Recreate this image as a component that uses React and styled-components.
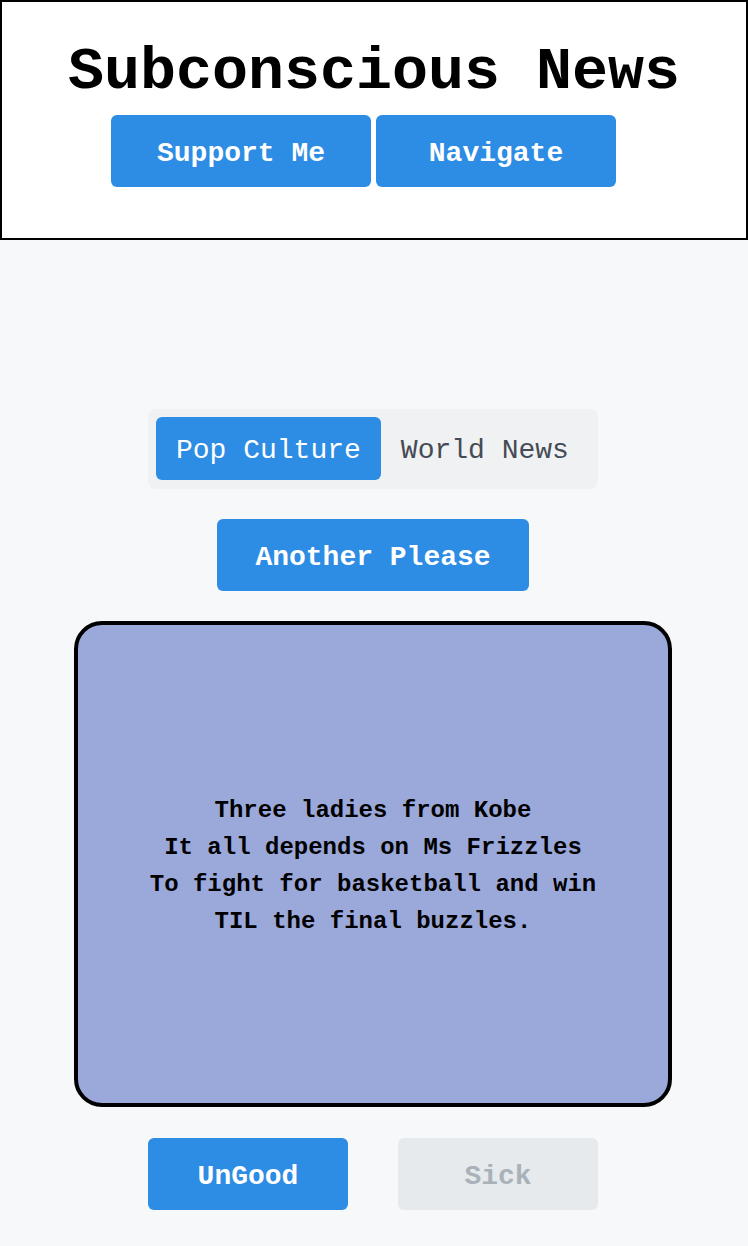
import React, { useState } from 'react';
import styled, { createGlobalStyle } from 'styled-components';

const GlobalStyle = createGlobalStyle`
  * { box-sizing: border-box; }
  body {
    margin: 0;
    background: #f7f8fa;
    font-family: "Liberation Mono", "Courier New", monospace;
  }
`;

const poem = [
  'Three ladies from Kobe',
  'It all depends on Ms Frizzles',
  'To fight for basketball and win',
  'TIL the final buzzles.',
];

const App = () => {
  const [tab, setTab] = useState('pop');

  return (
    <>
      <GlobalStyle />
      <Header>
        <Title>Subconscious News</Title>
        <HeaderButtons>
          <BlueButton $w={260}>Support Me</BlueButton>
          <BlueButton $w={240}>Navigate</BlueButton>
        </HeaderButtons>
      </Header>

      <Main>
        <Tabs>
          <Tab $active={tab === 'pop'} onClick={() => setTab('pop')}>Pop Culture</Tab>
          <Tab $active={tab === 'world'} onClick={() => setTab('world')}>World News</Tab>
        </Tabs>

        <BlueButton $w={312}>Another Please</BlueButton>

        <Card>
          <Poem>
            {poem.map((line) => (
              <div key={line}>{line}</div>
            ))}
          </Poem>
        </Card>

        <VoteRow>
          <BlueButton $w={200}>UnGood</BlueButton>
          <GreyButton>Sick</GreyButton>
        </VoteRow>
      </Main>
    </>
  );
};

export default App;

const Header = styled.header`
  height: 240px;
  background: #fff;
  border: 2px solid #000;
  padding: 36px 0 0;
  display: flex;
  flex-direction: column;
  align-items: center;
`;

const Title = styled.h1`
  margin: 0 0 9px;
  font-size: 60px;
  line-height: 68px;
  font-weight: bold;
  color: #000;
`;

const HeaderButtons = styled.div`
  display: flex;
  gap: 5px;
  padding-right: 21px;
`;

const BlueButton = styled.button`
  width: ${(p) => p.$w}px;
  height: 72px;
  border: none;
  border-radius: 6px;
  background: #2d8ce3;
  color: #fff;
  font-family: inherit;
  font-size: 28px;
  font-weight: bold;
  line-height: 36px;
  padding: 5px 0 0;
  cursor: pointer;
`;

const GreyButton = styled(BlueButton).attrs({ $w: 200 })`
  background: #e7eaed;
  color: #a9b1b9;
  cursor: default;
`;

const Main = styled.main`
  display: flex;
  flex-direction: column;
  align-items: center;
  gap: 30px;
  padding: 169px 2px 0 0;
`;

const Tabs = styled.div`
  display: flex;
  width: 450px;
  height: 80px;
  padding: 8px 8px 9px;
  background: #f0f1f3;
  border-radius: 8px;
`;

const Tab = styled.button`
  height: 63px;
  padding: 4px 20px 0;
  border: none;
  border-radius: 6px;
  background: ${(p) => (p.$active ? '#2d8ce3' : 'transparent')};
  color: ${(p) => (p.$active ? '#fff' : '#454b54')};
  font-family: inherit;
  font-size: 28px;
  font-weight: normal;
  cursor: pointer;
`;

const Card = styled.div`
  width: 598px;
  height: 486px;
  background: #9ba8da;
  border: 4px solid #000;
  border-radius: 28px;
  display: flex;
  align-items: center;
  justify-content: center;
`;

const Poem = styled.div`
  padding-top: 4px;
  text-align: center;
  font-size: 24px;
  font-weight: bold;
  line-height: 37px;
  color: #000;
`;

const VoteRow = styled.div`
  display: flex;
  gap: 50px;
  margin-top: 1px;
`;
